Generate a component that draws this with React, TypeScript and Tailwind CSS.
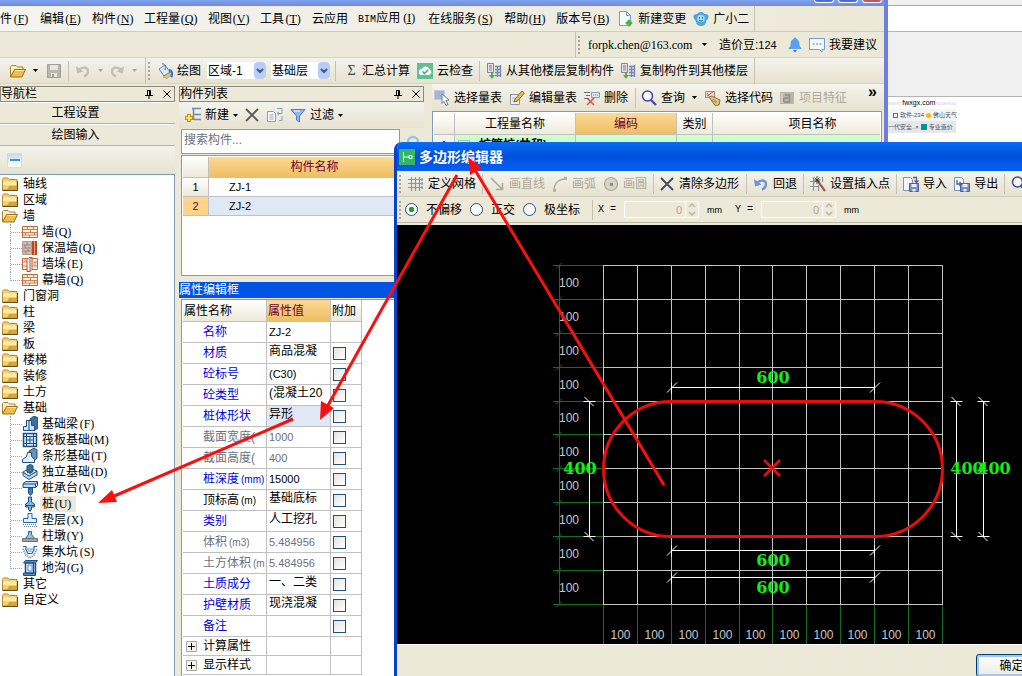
import { useState } from 'react';
import type { ReactNode } from 'react';
import clsx from 'clsx';

interface IconProps {
  children: ReactNode;
  className?: string;
}

const Icon = ({ children, className }: IconProps) => (
  <svg viewBox="0 0 16 16" fill="none" className={clsx('h-4 w-4 shrink-0', className)} aria-hidden="true">
    {children}
  </svg>
);

const Caret = ({ className }: { className?: string }) => (
  <svg viewBox="0 0 5 3" className={clsx('h-[3px] w-[5px] shrink-0', className)} aria-hidden="true">
    <path d="M0 0h5L2.5 3z" fill="currentColor" />
  </svg>
);

const FolderIcon = ({ className }: { className?: string }) => (
  <Icon className={className}>
    <path d="M.5 3.500l1-1.500h4.500l1.500 1.500h7.500v10.500H.5z" fill="#f4d06c" stroke="#b08c36" />
    <path d="M1 5.500h13.500v3.500H1z" fill="#fdeaa8" />
    <path d="M7 10h8v4H5z" fill="#dba22c" />
    <path d="M.5 14.500h15V5" stroke="#5f4a22" />
  </Icon>
);

const OpenFolderIcon = ({ className }: { className?: string }) => (
  <Icon className={className}>
    <path d="M.5 13.500V3.500l1-1h4.500l1.500 1.500h5.500v3" fill="#fdf0b4" stroke="#a8842c" />
    <path d="M.5 14l4-7.500h11l-3.500 7.500z" fill="#f0bd4a" stroke="#94702a" />
    <path d="M5 7.500h9" stroke="#ffe9a0" />
  </Icon>
);

const SaveIcon = ({ className }: { className?: string }) => (
  <Icon className={className}>
    <path d="M1.500 1.500h13v13h-13z" fill="#b9b7ad" stroke="#a3a197" />
    <path d="M4 2h8v5H4zM5 10h6v4H5z" fill="#e8e6da" />
    <path d="M6 11h2v3H6z" fill="#a3a197" />
  </Icon>
);

const UndoIcon = ({ className }: { className?: string }) => (
  <Icon className={className}>
    <path d="M4 8c1-4 9-5 9 0 0 2.500-1.500 4.500-4 5.500" stroke="currentColor" strokeWidth="2.500" />
    <path d="M1 3l1 7.500 6.500-2z" fill="currentColor" />
  </Icon>
);

const PaintIcon = ({ className }: { className?: string }) => (
  <Icon className={className}>
    <path d="M2 6l6-4 5 7-6 4z" fill="#dfe8f6" stroke="#5c7fb5" />
    <path d="M5 1c3-1 4 3 3 6" stroke="#456aa5" />
    <path d="M12 7c3 1 4 4 2 7" stroke="#3e74d0" strokeWidth="2.500" />
    <path d="M6 14l6-4 2 2-4 3.500z" fill="#e4c868" stroke="#9c8a4a" strokeWidth=".6" />
  </Icon>
);

const CloudCheckIcon = ({ className }: { className?: string }) => (
  <Icon className={className}>
    <path d="M0 0h16v16H0z" fill="#5fc191" />
    <path d="M4.500 12h7.500a3 3 0 0 0 .4-5.800A4 4 0 0 0 5 6a3 3 0 0 0-.5 6z" fill="#fff" />
    <path d="M5.500 8.500l2 2 3.500-3.500" stroke="#3aa872" strokeWidth="1.500" />
  </Icon>
);

const CopyFloorIcon = ({ className }: { className?: string }) => (
  <Icon className={className}>
    <path d="M1.500.5h6v9h-6z" fill="#e3e3ea" stroke="#84848e" />
    <path d="M3 3h3" stroke="#c44" />
    <path d="M3 5h3M3 7h3" stroke="#84848e" />
    <path d="M9 3.500h5.500M9 6.500h5.500M9 9.500h5.500M9 12.500h5.500M14.500 2v12M11.500 3v11" stroke="#7289b7" strokeWidth="1.300" />
    <path d="M5 9v3H3l3 4 3-4H7V9z" fill="#57a45c" />
  </Icon>
);

const NewChangeIcon = ({ className }: { className?: string }) => (
  <Icon className={className}>
    <path d="M1.500.5h7l4 4v10h-11z" fill="#f4faff" stroke="#6fa1d4" />
    <path d="M8.500.5v4h4" stroke="#6fa1d4" />
    <path d="M11 8l1.500 2.500 2.500 1.500-2.500 1.500L11 16l-1.500-2.500L7 12l2.500-1.500z" fill="#4bb03e" />
    <path d="M11 9v6M8 12h6" stroke="#4bb03e" strokeWidth="2.500" />
  </Icon>
);

const MascotIcon = ({ className }: { className?: string }) => (
  <Icon className={className}>
    <path d="M8 1c2 0 3 2 4 2s4 0 3.500 3-2.500 3-2.500 5-2 4-5 4-5-2-5-4-2-2-2.500-5S4 3 4 3s2-2 4-2z" fill="#4aa8dd" />
    <circle cx="8" cy="7.500" r="3.800" fill="#a9dcf5" />
    <path d="M6.500 6v1.500M9.500 6v1.500M6 9c1 1.500 3 1.500 4 0" stroke="#1c66a0" />
  </Icon>
);

const BellIcon = ({ className }: { className?: string }) => (
  <Icon className={className}>
    <path d="M8 .5c1 0 1.500.8 1.500 1.500C12 3 12.500 5 12.500 8c0 2 2 2.500 2 4h-13c0-1.500 2-2 2-4 0-3 .5-5 3-6 0-.7.5-1.500 1.500-1.500z" fill="#5aa2f0" />
    <path d="M6 13h4l-2 2.500z" fill="#3a6fb5" />
  </Icon>
);

const ChatIcon = ({ className }: { className?: string }) => (
  <Icon className={className}>
    <path d="M.5 1.500h15v11H13v2.500l-2.500-2.500H.5z" fill="#f3f9ff" stroke="#6e9fd6" />
    <path d="M3.500 7h2M7 7h2M10.500 7h2" stroke="#4f83bf" />
  </Icon>
);

const SelectTableIcon = ({ className }: { className?: string }) => (
  <Icon className={className}>
    <path d="M.5.5h10v9H.5z" fill="#a9b3d4" stroke="#c5cbe0" />
    <path d="M8 4l7 6-3 .5 2 4-2 1-2-4-2 2z" fill="#fff" stroke="#6c7ca8" />
  </Icon>
);

const EditTableIcon = ({ className }: { className?: string }) => (
  <Icon className={className}>
    <path d="M1.500 4.500h9v10h-9z" fill="#eef1f5" stroke="#8b97a8" />
    <path d="M3 8h5M3 11h6" stroke="#9fb0c8" />
    <path d="M5 12l1-3 7-8 2.500 2-7 8z" fill="#e8b850" stroke="#755a2c" strokeWidth=".8" />
  </Icon>
);

const DeleteRowIcon = ({ className }: { className?: string }) => (
  <Icon className={className}>
    <path d="M0 2.500h6M2 5.500h4M0 8.500h5" stroke="#5f6f80" />
    <path d="M7.500 2.500h8v5h-8z" fill="#dce8f7" stroke="#7c9bc5" />
    <path d="M9 5h5" stroke="#6587b8" strokeDasharray="1 1" />
    <path d="M3 8l7 7M10 8l-7 7" stroke="#e2504a" strokeWidth="1.600" />
  </Icon>
);

const SearchIcon = ({ className }: { className?: string }) => (
  <Icon className={className}>
    <circle cx="6.500" cy="6" r="5" fill="#f5f8fd" stroke="#42459a" strokeWidth="1.500" />
    <path d="M10 10l5 5" stroke="#42459a" strokeWidth="2.200" />
  </Icon>
);

const CodeTagIcon = ({ className }: { className?: string }) => (
  <Icon className={className}>
    <path d="M.5 1.500h9v6h-9z" fill="#f3dede" stroke="#9c8c8c" />
    <path d="M2 6l6-4M2 3l2 3" stroke="#d05050" />
    <path d="M4 7l3-1 8 4-1 5-4 .5z" fill="#e3c684" stroke="#8c6f3c" />
    <path d="M8 9l4 3M7 10l4 3" stroke="#8c6f3c" strokeWidth=".7" />
  </Icon>
);

const FeatureIcon = ({ className }: { className?: string }) => (
  <Icon className={className}>
    <path d="M1 2h14v12H1z" fill="#b9b7ab" />
    <path d="M6 5h4.500v7H6.500a2 2 0 0 1 0-4H10" stroke="#8f8d82" strokeWidth="1.500" />
    <path d="M3 3v10" stroke="#e6e4d8" />
  </Icon>
);

const NewItemIcon = ({ className }: { className?: string }) => (
  <Icon className={className}>
    <path d="M7 1.500h9M9 7.500h7M9 12.500h7M8.500 1v12" stroke="#6f8bb3" strokeWidth="1.500" />
    <path d="M4 7v8M0 11h8" stroke="#b98f1e" strokeWidth="4" />
    <path d="M4 8v6M1 11h6" stroke="#ffe36a" strokeWidth="2" />
  </Icon>
);

const CrossIcon = ({ className }: { className?: string }) => (
  <Icon className={className}>
    <path d="M2 2l12 12M14 2L2 14" stroke="currentColor" strokeWidth="1.800" />
  </Icon>
);

const CopyIcon = ({ className }: { className?: string }) => (
  <Icon className={className}>
    <path d="M.5 4.500h6l2 2v8h-8z" fill="#f5f7fb" stroke="#8c9dba" />
    <path d="M2.500 8h4M2.500 10h4M2.500 12h4" stroke="#9aacc9" />
    <path d="M10 1.500h5v5h-4M12 13.500h3V9M12 5l-2 1.500 2 1.500" stroke="#8c9dba" />
  </Icon>
);

const FunnelIcon = ({ className }: { className?: string }) => (
  <Icon className={className}>
    <path d="M1 2.500h14L9.500 9v6l-3-2V9z" fill="#8fb6ef" stroke="#4f7fc9" />
    <path d="M4 4h6" stroke="#d7e6fb" strokeWidth="1.500" />
  </Icon>
);

const PinIcon = ({ className }: { className?: string }) => (
  <svg viewBox="0 0 8 9" fill="none" className={clsx('h-[9px] w-2 shrink-0', className)} aria-hidden="true">
    <path d="M2.500 5V.5h3V5M0 5.500h8M4 6v3" stroke="#000" />
    <path d="M5 1v4" stroke="#000" strokeWidth="2" />
  </svg>
);

const CloseMark = () => (
  <svg viewBox="0 0 8 8" fill="none" className="h-2 w-2 shrink-0" aria-hidden="true">
    <path d="M.5.5l7 7M7.500.5l-7 7" stroke="#000" />
  </svg>
);

const GridIcon = ({ className }: { className?: string }) => (
  <Icon className={className}>
    <path d="M0 3.500h14M0 7.500h14M0 11.500h14M3.500 1v14M7.500 1v14M11.500 1v14" stroke="#7d95c4" strokeWidth="1.200" />
    <path d="M13 3.500h3M13 7.500h3M13 11.500h3" stroke="#8aa2cc" strokeWidth="2.500" strokeDasharray="2 1" />
  </Icon>
);

const LineIcon = ({ className }: { className?: string }) => (
  <Icon className={className}>
    <path d="M2 2l11 11M13.500 7v6.500H7" stroke="#aaa89c" strokeWidth="1.500" />
  </Icon>
);

const ArcIcon = ({ className }: { className?: string }) => (
  <Icon className={className}>
    <path d="M2 15C2 7 7 3 14 3" stroke="#aaa89c" strokeWidth="1.500" />
    <path d="M1 13h3v3H1zM12 1h3v3h-3z" fill="#b5b3a8" />
  </Icon>
);

const CircleIcon = ({ className }: { className?: string }) => (
  <Icon className={className}>
    <circle cx="8" cy="8" r="6.500" fill="#d6d4c8" stroke="#aaa89c" strokeWidth="1.200" />
    <path d="M7 7h3v3H7z" fill="#8f8d82" />
  </Icon>
);

const InsertPointIcon = ({ className }: { className?: string }) => (
  <Icon className={className}>
    <path d="M0 5.500h10M0 10.500h9M3.500 1v14M8.500 9v6M12.500 1v5" stroke="#8c95a6" strokeWidth="1.200" />
    <path d="M7 4l8 11" stroke="#a15a4e" strokeWidth="2.200" />
    <path d="M7 0v8M3.500 4h7M4.500 1.500l5 5M9.500 1.500l-5 5" stroke="#333" strokeWidth=".8" />
  </Icon>
);

const TransferIcon = ({ className, out = false }: { className?: string; out?: boolean }) => (
  <Icon className={className}>
    <path d="M.5 1.500h7l2 2v11h-9z" fill="#f2f5fb" stroke="#7e93bd" />
    <path d="M6.500 7.500h9v8h-9z" fill="#7d90c4" stroke="#4c609a" />
    <path d="M8.500 8h5v3h-5zM9.500 13h3v2.500h-3z" fill="#e9eef9" />
    <path d={out ? 'M3 4v4h4M5.500 6l2 2-2 2' : 'M10 1.500h3.500V6M11.500 4.500l2 2 2-2'} stroke="#4c609a" strokeWidth="1.300" />
  </Icon>
);

const BrickIcon = () => (
  <Icon>
    <path d="M.5 2.500h15v11H.5z" fill="#fdf1e6" stroke="#c4683a" />
    <path d="M1 5.500h14M1 8.500h14M1 11h14M5.500 3v2.500M11.500 3v2.500M8.500 6v2M3.500 9v2M12.500 9v2M7.500 11v2" stroke="#d5804f" />
  </Icon>
);

const InsulatedWallIcon = () => (
  <Icon>
    <path d="M.5 1.500h9v13h-9z" fill="#cdbbb8" stroke="#b99c96" />
    <path d="M1 5h8M1 8h8M1 11h8M5 2v3M3 5v3M6 8v3M4 11v3" stroke="#a88680" />
    <path d="M11 1v14M14 1v14" stroke="#b8482c" strokeWidth="2" />
    <path d="M12.500 1v14" stroke="#f0a070" />
  </Icon>
);

const WallPierIcon = () => (
  <Icon>
    <path d="M.5 2.500h15v11H.5z" fill="#fdf1e6" stroke="#c4683a" />
    <path d="M1 6h4M1 10h4M11 6h4M11 10h4M3 3v3M13 6v4" stroke="#d5804f" />
    <path d="M5 3.500l2-2h3v12l-2 2H5z" fill="#fff" stroke="#b8482c" />
    <path d="M8 3.500v12M8 3.500l2-2" stroke="#b8482c" />
  </Icon>
);

const beamParts = (
  <>
    <path d="M8 3l4-3 4 2v10l-4 3z" fill="#3f6f9f" stroke="#1d4f86" />
    <path d="M4.500 4.500h5v5h3v5H1.500v-4h3z" fill="#cfe6f8" stroke="#1d4f86" />
    <path d="M7 5v9" stroke="#1d4f86" />
  </>
);

const raftParts = (
  <>
    <path d="M1.500 1.500h13v13h-13z" fill="#d6eaf9" stroke="#1d4f86" strokeWidth="1.500" />
    <path d="M4.500 1v14M11.500 1v14M1 4.500h14M1 11.500h14M8 4v8M4 8h8" stroke="#1d4f86" />
  </>
);

const stripParts = (
  <>
    <path d="M7 3l5-3 3 2v8l-4 4z" fill="#6c8fb5" stroke="#1d4f86" />
    <path d="M5.500 4.500h4v4l3 3v3H.500v-3l4-3z" fill="#e4f2fd" stroke="#1d4f86" />
  </>
);

const isolatedParts = (
  <>
    <path d="M1 8l6 4 8-5v4l-8 4.500-6-4z" fill="#bcdcf3" stroke="#1d4f86" />
    <path d="M1 8l7-4 7 3-8 5z" fill="#e4f2fd" stroke="#1d4f86" />
    <path d="M5 2l3-1.500 3 1v6l-3 2-3-1.500z" fill="#3f6f9f" stroke="#1d4f86" />
  </>
);

const capParts = (
  <>
    <path d="M1 3.500l3-2h11.500v4l-2 2H1z" fill="#bcdcf3" stroke="#1d4f86" />
    <path d="M1 4h12.500v3M13.500 4l2-2" stroke="#1d4f86" />
    <path d="M6.500 8h4v5l-2 2.500-2-2.500z" fill="#3f7fc0" stroke="#1d4f86" />
  </>
);

const pileParts = (
  <>
    <path d="M6.500 1h3v5l3 2v3h-3v2L8 15.500 6.500 13v-2h-3V8l3-2z" fill="#7fb4e2" stroke="#1d4f86" />
    <path d="M4 9.500h8" stroke="#1d4f86" />
  </>
);

const cushionParts = (
  <>
    <path d="M6 1.500h4v5h4.500v4H1.500v-4H6z" fill="#e4f2fd" stroke="#2463b0" />
    <path d="M1 12.500h14M2 14.500h13" stroke="#5a7ba6" strokeDasharray="1 1" />
  </>
);

const pierParts = (
  <>
    <path d="M6.500 3.500h3v3l3 4h-9l3-4z" fill="#8fc0ee" stroke="#2463b0" />
    <path d="M.5 10.500h15v3H.5z" fill="#a5a5a5" stroke="#6e6e6e" />
  </>
);

const sumpParts = (
  <>
    <path d="M1 2.500h3v3l2 4h4l2-4v-3h3" stroke="#2463b0" strokeWidth="1.200" />
    <path d="M1 5l3 6 4 3 4-3 3-6" stroke="#5b8fd0" strokeWidth="2" strokeDasharray="1 1" />
    <path d="M5 5h6M6 7h4" stroke="#5b8fd0" />
  </>
);

const trenchParts = (
  <>
    <path d="M1.500 3l2-2.500h12l-2 2.500zM1.500 13h12v2.500h-12z" fill="#5d94cb" stroke="#1d4f86" />
    <path d="M3.500 3h8v10h-8zM13.500 3v10" fill="#e4f2fd" stroke="#1d4f86" strokeWidth="1.500" />
    <path d="M6 5h4v6H6z" stroke="#5d94cb" />
  </>
);

interface TreeLeaf {
  label: string;
  hotkey: string;
  icon: ReactNode;
}

interface TreeGroup {
  label: string;
  children?: TreeLeaf[];
}

const NAV_TREE: TreeGroup[] = [
  { label: '轴线' },
  { label: '区域' },
  {
    label: '墙',
    children: [
      { label: '墙', hotkey: 'Q', icon: <BrickIcon /> },
      { label: '保温墙', hotkey: 'Q', icon: <InsulatedWallIcon /> },
      { label: '墙垛', hotkey: 'E', icon: <WallPierIcon /> },
      { label: '幕墙', hotkey: 'Q', icon: <BrickIcon /> },
    ],
  },
  { label: '门窗洞' },
  { label: '柱' },
  { label: '梁' },
  { label: '板' },
  { label: '楼梯' },
  { label: '装修' },
  { label: '土方' },
  {
    label: '基础',
    children: [
      { label: '基础梁', hotkey: 'F', icon: <Icon>{beamParts}</Icon> },
      { label: '筏板基础', hotkey: 'M', icon: <Icon>{raftParts}</Icon> },
      { label: '条形基础', hotkey: 'T', icon: <Icon>{stripParts}</Icon> },
      { label: '独立基础', hotkey: 'D', icon: <Icon>{isolatedParts}</Icon> },
      { label: '桩承台', hotkey: 'V', icon: <Icon>{capParts}</Icon> },
      { label: '桩', hotkey: 'U', icon: <Icon>{pileParts}</Icon> },
      { label: '垫层', hotkey: 'X', icon: <Icon>{cushionParts}</Icon> },
      { label: '柱墩', hotkey: 'Y', icon: <Icon>{pierParts}</Icon> },
      { label: '集水坑', hotkey: 'S', icon: <Icon>{sumpParts}</Icon> },
      { label: '地沟', hotkey: 'G', icon: <Icon>{trenchParts}</Icon> },
    ],
  },
  { label: '其它' },
  { label: '自定义' },
];

const MENU = [
  { label: '件', hotkey: 'F' },
  { label: '编辑', hotkey: 'E' },
  { label: '构件', hotkey: 'N' },
  { label: '工程量', hotkey: 'Q' },
  { label: '视图', hotkey: 'V' },
  { label: '工具', hotkey: 'T' },
  { label: '云应用' },
  { prefix: 'BIM', label: '应用', hotkey: 'I' },
  { label: '在线服务', hotkey: 'S' },
  { label: '帮助', hotkey: 'H' },
  { label: '版本号', hotkey: 'B' },
];

const PROPERTIES = [
  { name: '名称', value: 'ZJ-2', tone: 'blue', check: false },
  { name: '材质', value: '商品混凝', tone: 'blue', check: true },
  { name: '砼标号', value: '(C30)', tone: 'blue', check: true },
  { name: '砼类型', value: '(混凝土20', tone: 'blue', check: true },
  { name: '桩体形状', value: '异形', tone: 'blue', check: true },
  { name: '截面宽度(', value: '1000', tone: 'gray', check: true },
  { name: '截面高度(', value: '400', tone: 'gray', check: true },
  { name: '桩深度', unit: '(mm)', value: '15000', tone: 'blue', check: true },
  { name: '顶标高', unit: '(m)', value: '基础底标', tone: 'black', check: true },
  { name: '类别', value: '人工挖孔', tone: 'blue', check: true },
  { name: '体积', unit: '(m3)', value: '5.484956', tone: 'gray', check: true },
  { name: '土方体积', unit: '(m', value: '5.484956', tone: 'gray', check: true },
  { name: '土质成分', value: '一、二类', tone: 'blue', check: true },
  { name: '护壁材质', value: '现浇混凝', tone: 'blue', check: true },
  { name: '备注', value: '', tone: 'blue', check: true },
];

const Hotkey = ({ letter, underline = false }: { letter: string; underline?: boolean }) => (
  <span className="inline-block w-[18px] text-center font-['Liberation_Serif',serif]">
    (<span className={underline ? 'underline' : ''}>{letter}</span>)
  </span>
);

const Divider = ({ className }: { className?: string }) => (
  <span className={clsx('h-5 w-px shrink-0 bg-[#c5c2b2]', className)} />
);

const Grip = ({ className }: { className?: string }) => (
  <span className={clsx('h-[18px] shrink-0 border-l-2 border-dotted border-[#a9a695]', className)} />
);

interface ToolButtonProps {
  icon?: ReactNode;
  label?: string;
  className?: string;
  disabled?: boolean;
  menu?: boolean;
  tight?: boolean;
}

function ToolButton({ icon, label, className, disabled, menu, tight }: ToolButtonProps) {
  return (
    <button
      type="button"
      disabled={disabled}
      className={clsx('flex shrink-0 items-center whitespace-nowrap', disabled && 'text-[#aca899]', className)}
    >
      {icon}
      {label && <span className={icon ? 'ml-1' : ''}>{label}</span>}
      {menu && <Caret className={tight ? 'ml-1' : 'ml-[7px]'} />}
    </button>
  );
}

function ComboBox({ label, options, className }: { label: string; options: string[]; className?: string }) {
  return (
    <span className={clsx('relative block w-[59px] shrink-0', className)}>
      <select aria-label={label} className="h-[17px] w-full appearance-none bg-white pl-px text-xs leading-4">
        {options.map((option) => (
          <option key={option}>{option}</option>
        ))}
      </select>
      <span className="pointer-events-none absolute inset-y-0 right-0 flex w-3 items-center justify-center rounded-sm bg-[#b9cdf7]">
        <svg viewBox="0 0 8 6" fill="none" className="h-[6px] w-2">
          <path d="M1 1l3 3 3-3" stroke="#3d5a8c" strokeWidth="2" />
        </svg>
      </span>
    </span>
  );
}

function PanelHeading({ title }: { title: string }) {
  return (
    <header className="mt-[2px] flex h-[16px] shrink-0 items-center border border-[#8b897b] pr-[3px]">
      <h2 className="flex-1 leading-[14px]">{title}</h2>
      <button type="button" aria-label="固定" className="mr-[10px]">
        <PinIcon />
      </button>
      <button type="button" aria-label="关闭">
        <CloseMark />
      </button>
    </header>
  );
}

function MenuBar() {
  return (
    <nav className="flex h-[26px] shrink-0 items-center gap-[10px] border-b border-[#cfccbd] bg-gradient-to-r from-[#f4f4f0] to-[#ece9d8]">
      {MENU.map((item) => (
        <button key={item.label} type="button" className="shrink-0 whitespace-nowrap">
          {item.prefix && <span className="font-['Liberation_Mono',monospace] text-[10px]">{item.prefix}</span>}
          {item.label}
          {item.hotkey && <Hotkey letter={item.hotkey} underline />}
        </button>
      ))}
      <ToolButton icon={<NewChangeIcon />} label="新建变更" className="-ml-[2px]" />
      <ToolButton icon={<MascotIcon />} label="广小二" className="-ml-[3px]" />
      <Divider className="-ml-[5px] h-[26px]" />
    </nav>
  );
}

function AccountBar() {
  return (
    <div className="flex h-[26px] shrink-0 items-center justify-end border-b border-[#d8d5c5] pr-[7px]">
      <Divider className="h-[26px]" />
      <Grip className="ml-[2px]" />
      <ToolButton
        label="forpk.chen@163.com"
        menu
        className="ml-2 w-[121px] justify-between pr-[2px] font-['Liberation_Serif',serif]"
      />
      <span className="ml-[10px] w-[60px] shrink-0 whitespace-nowrap">
        造价豆:<span className="text-[11px]">124</span>
      </span>
      <button type="button" aria-label="通知" className="ml-2">
        <BellIcon />
      </button>
      <ToolButton icon={<ChatIcon />} label="我要建议" className="ml-[6px]" />
    </div>
  );
}

function MainToolbar() {
  return (
    <div className="flex h-[26px] shrink-0 items-center border-b border-[#d8d5c5] bg-gradient-to-b from-[#f5f4ec] to-[#e6e2d0]">
      <ToolButton icon={<OpenFolderIcon />} menu className="ml-[10px]" />
      <ToolButton icon={<SaveIcon />} disabled className="ml-2" />
      <Divider className="ml-[6px] bg-[#aaa797]" />
      <ToolButton icon={<UndoIcon className="text-[#c3c1b5]" />} disabled menu className="ml-[6px]" />
      <ToolButton icon={<UndoIcon className="-scale-x-100 text-[#c3c1b5]" />} disabled menu className="ml-[6px]" />
      <Divider className="ml-2 h-[26px]" />
      <Grip className="ml-[2px]" />
      <ToolButton icon={<PaintIcon />} label="绘图" className="ml-[7px]" />
      <ComboBox label="区域" options={['区域-1']} className="ml-[6px]" />
      <ComboBox label="楼层" options={['基础层']} className="ml-[5px]" />
      <Divider className="ml-[5px]" />
      <ToolButton
        icon={<span className="w-[13px] font-['Liberation_Serif',serif] text-sm text-gray-700">Σ</span>}
        label="汇总计算"
        className="ml-[9px]"
      />
      <ToolButton icon={<CloudCheckIcon />} label="云检查" className="ml-[7px]" />
      <Divider className="ml-[6px]" />
      <ToolButton icon={<CopyFloorIcon />} label="从其他楼层复制构件" className="ml-[6px]" />
      <ToolButton icon={<CopyFloorIcon />} label="复制构件到其他楼层" className="ml-[6px]" />
      <Divider className="ml-[6px] h-[26px]" />
    </div>
  );
}

function NavigationPanel() {
  return (
    <aside className="flex w-[175px] shrink-0 flex-col">
      <PanelHeading title="导航栏" />
      <button
        type="button"
        className="h-[22px] shrink-0 border-b border-t border-[#b5b2a2] border-t-white pr-[24px] leading-5"
      >
        工程设置
      </button>
      <button
        type="button"
        className="h-[22px] shrink-0 border-b border-t border-[#b5b2a2] border-t-white pr-[24px] leading-5"
      >
        绘图输入
      </button>
      <div className="flex h-[28px] shrink-0 items-center bg-gradient-to-b from-[#f5f4ec] to-[#e6e2d0] pl-[7px]">
        <button
          type="button"
          aria-label="全部折叠"
          className="flex h-[15px] w-[15px] items-center justify-center border border-[#cfdcec] bg-gradient-to-b from-[#c4dbf4] to-white"
        >
          <span className="h-[2px] w-[10px] bg-[#4a94b8]" />
        </button>
      </div>
      <ul className="flex-1 overflow-hidden border-r border-t border-[#7f9db9] bg-white pt-px">
        {NAV_TREE.map((group) => (
          <li key={group.label}>
            <div className="flex h-4 items-center pl-[2px]">
              {group.children ? <OpenFolderIcon /> : <FolderIcon />}
              <span className="ml-[5px]">{group.label}</span>
            </div>
            {group.children && (
              <ul>
                {group.children.map((leaf, index) => (
                  <li key={leaf.label} className="flex h-4 items-center pl-[10px]">
                    <span
                      className={clsx(
                        'w-3 shrink-0 self-start border-l border-dotted border-gray-400',
                        index === group.children!.length - 1 ? 'h-[9px]' : 'h-4'
                      )}
                    >
                      <span className="block h-[9px] border-b border-dotted border-gray-400" />
                    </span>
                    {leaf.icon}
                    <span className={clsx('ml-[2px] pl-[2px] pr-1', leaf.label === '桩' && 'bg-[#ece9d8]')}>
                      {leaf.label}
                      <Hotkey letter={leaf.hotkey} />
                    </span>
                  </li>
                ))}
              </ul>
            )}
          </li>
        ))}
      </ul>
    </aside>
  );
}

function ComponentList() {
  return (
    <>
      <PanelHeading title="构件列表" />
      <div className="flex h-[26px] shrink-0 items-center bg-gradient-to-b from-[#f5f4ec] to-[#e6e2d0]">
        <ToolButton icon={<NewItemIcon />} label="新建" menu tight className="ml-[6px]" />
        <ToolButton icon={<CrossIcon className="text-[#555]" />} className="ml-[6px]" />
        <ToolButton icon={<CopyIcon />} className="ml-[7px]" />
        <ToolButton icon={<FunnelIcon />} label="过滤" menu tight className="ml-[7px]" />
      </div>
      <div className="mt-px flex h-[25px] shrink-0 items-center">
        <input
          type="text"
          aria-label="搜索构件"
          placeholder="搜索构件..."
          className="ml-[2px] h-full w-[219px] border border-[#7f9db9] bg-white px-[2px] pb-1 text-xs placeholder:text-gray-500"
        />
        <svg viewBox="0 0 16 16" fill="none" className="ml-[5px] h-4 w-4 self-center">
          <circle cx="8" cy="8" r="5" stroke="#9cc3ea" strokeWidth="2.500" />
        </svg>
      </div>
      <div className="ml-[2px] mt-px h-[121px] shrink-0 border border-[#7f9db9] bg-white p-px">
        <table className="w-full table-fixed border-separate border-spacing-0">
          <thead>
            <tr className="h-[21px]">
              <th className="w-[26px] border-b border-r border-[#c0c0c0] bg-gradient-to-b from-white to-[#ece9d8] p-0" />
              <th className="border-b border-[#c0c0c0] bg-gradient-to-b from-[#fbd994] to-[#f0be62] p-0 pr-[2px] font-normal text-[#6b0030]">
                构件名称
              </th>
            </tr>
          </thead>
          <tbody>
            {['ZJ-1', 'ZJ-2'].map((name, index) => (
              <tr key={name} className="h-[19px] text-[11px]">
                <td
                  className={clsx(
                    'border-b border-r border-[#c0c0c0] p-0 text-center',
                    index === 1 ? 'bg-[#ffd48a] text-[#6b0030]' : 'bg-gradient-to-b from-white to-[#ece9d8]'
                  )}
                >
                  {index + 1}
                </td>
                <td className={clsx('border-b border-[#c0c0c0] p-0 pl-5', index === 1 && 'bg-[#e0e8f6]')}>{name}</td>
              </tr>
            ))}
          </tbody>
        </table>
      </div>
    </>
  );
}

const isNarrowText = (value: string) => /^[\x20-\x7e]*$/.test(value);

function PropertyEditor() {
  return (
    <>
      <h2 className="mt-[6px] h-4 shrink-0 bg-[#0054e3] leading-4 text-white">属性编辑框</h2>
      <div className="ml-[2px] mt-px flex-1 overflow-hidden border-l border-t border-[#7f9db9] bg-white pl-px">
        <table className="w-[179px] table-fixed border-separate border-spacing-0">
          <thead>
            <tr className="h-[22px] text-left">
              <th className="w-[84px] border-b border-r border-[#c0c0c0] bg-gradient-to-b from-white to-[#ece9d8] p-0 pl-px font-normal">
                属性名称
              </th>
              <th className="w-[64px] border-b border-r border-[#c0c0c0] bg-gradient-to-b from-[#fbd994] to-[#f0be62] p-0 pl-px font-normal text-[#6b0030]">
                属性值
              </th>
              <th className="w-[31px] border-b border-r border-[#c0c0c0] bg-gradient-to-b from-white to-[#ece9d8] p-0 pl-px font-normal">
                附加
              </th>
            </tr>
          </thead>
          <tbody>
            {PROPERTIES.map((row) => (
              <tr
                key={row.name}
                className={clsx('h-[21px] whitespace-nowrap', row.tone === 'gray' && 'text-gray-500')}
              >
                <td
                  className={clsx(
                    'overflow-hidden border-b border-r border-[#c0c0c0] p-0 pl-5',
                    row.tone === 'blue' && 'text-[#0000e0]'
                  )}
                >
                  {row.name}
                  {row.unit && <span className="ml-[2px] text-[10px]">{row.unit}</span>}
                </td>
                <td
                  className={clsx(
                    'overflow-hidden border-b border-r border-[#c0c0c0] p-0 pl-[2px]',
                    isNarrowText(row.value) ? 'text-[11px]' : 'pb-1',
                    row.value === '异形' && 'bg-[#e0e8f6]'
                  )}
                >
                  {row.value}
                </td>
                <td className="border-b border-r border-[#c0c0c0] p-0 pl-[2px]">
                  {row.check && (
                    <input
                      type="checkbox"
                      aria-label={`附加 ${row.name}`}
                      className="block h-[13px] w-[13px] appearance-none border border-[#1c5180] bg-gradient-to-br from-[#e6e4de] to-white"
                    />
                  )}
                </td>
              </tr>
            ))}
            {['计算属性', '显示样式'].map((name) => (
              <tr key={name} className="h-[19px]">
                <td className="border-b border-r border-[#c0c0c0] p-0 pl-[3px]">
                  <button type="button" className="flex items-center">
                    <svg viewBox="0 0 11 11" fill="none" className="mr-[6px] h-[11px] w-[11px]">
                      <path d="M.5.5h10v10H.5z" fill="#f3f3ef" stroke="#a8a8a0" />
                      <path d="M2 5.500h7M5.500 2v7" stroke="#000" />
                    </svg>
                    {name}
                  </button>
                </td>
                <td className="border-b border-r border-[#c0c0c0] p-0" />
                <td className="border-b border-r border-[#c0c0c0] p-0" />
              </tr>
            ))}
          </tbody>
        </table>
      </div>
    </>
  );
}

function QuantityPanel() {
  return (
    <section className="ml-2 flex min-w-0 flex-1 flex-col">
      <div className="flex h-[27px] shrink-0 items-center bg-gradient-to-b from-[#f5f4ec] to-[#e6e2d0]">
        <ToolButton icon={<SelectTableIcon />} label="选择量表" className="ml-[2px]" />
        <ToolButton icon={<EditTableIcon />} label="编辑量表" className="ml-[7px]" />
        <ToolButton icon={<DeleteRowIcon />} label="删除" className="ml-[7px]" />
        <Divider className="ml-[7px] bg-[#aaa797]" />
        <ToolButton icon={<SearchIcon />} label="查询" menu className="ml-[5px]" />
        <ToolButton icon={<CodeTagIcon />} label="选择代码" className="ml-[8px]" />
        <ToolButton icon={<FeatureIcon />} label="项目特征" disabled className="ml-[6px]" />
        <button type="button" className="ml-auto mr-[7px] self-start text-base font-bold leading-4">
          »
        </button>
      </div>
      <div className="mr-[2px] flex-1 border border-[#7f9db9] bg-white p-px">
        <table className="w-full table-fixed border-separate border-spacing-0">
          <thead>
            <tr className="h-[22px] bg-gradient-to-b from-white to-[#ece9d8]">
              <th className="w-[21px] border-b border-r border-[#c0c0c0] p-0" />
              <th className="w-[121px] border-b border-r border-[#c0c0c0] p-0 font-normal">工程量名称</th>
              <th className="w-[101px] border-b border-r border-[#c0c0c0] bg-gradient-to-b from-[#fbd994] to-[#f0be62] p-0 font-normal text-[#6b0030]">
                编码
              </th>
              <th className="w-[36px] border-b border-r border-[#c0c0c0] p-0 font-normal">类别</th>
              <th className="border-b border-[#c0c0c0] p-0 pl-8 font-normal">项目名称</th>
            </tr>
          </thead>
          <tbody>
            <tr className="h-5 bg-[#ccffcc]">
              <td className="border-r border-[#c0c0c0] bg-[#f4f2e8] p-0 text-center text-[11px]">1</td>
              <td className="border-r border-[#c0c0c0] p-0 font-bold">
                <span className="ml-[3px] mr-[9px] inline-block h-3 w-3 border border-[#a8c8a8] align-middle" />
                桩管桩(共和)
              </td>
              <td className="border-r border-[#c0c0c0] p-0" />
              <td className="border-r border-[#c0c0c0] p-0" />
              <td className="p-0" />
            </tr>
          </tbody>
        </table>
      </div>
    </section>
  );
}

function CoordinateField({ axis, className }: { axis: string; className?: string }) {
  return (
    <label className={clsx('flex items-center', className)}>
      <span className="w-[26px] whitespace-pre font-['Liberation_Mono',monospace] text-[10px]">{axis} =</span>
      <span className="flex h-[17px] w-[75px] items-center border border-white bg-[#ece9d8]">
        <input
          type="text"
          disabled
          defaultValue="0"
          className="w-[61px] border-r border-white pr-[3px] text-right text-[11px] text-[#aca899]"
        />
        <svg viewBox="0 0 12 15" fill="none" className="h-[15px] w-3">
          <path d="M3 5l3-3 3 3M3 10l3 3 3-3" stroke="#b8b5a5" strokeWidth="1.500" />
        </svg>
      </span>
      <span className="ml-2 w-[14px] text-[9px]">mm</span>
    </label>
  );
}

const GRID_X = [603.5, 637.5, 671.5, 705.5, 739.5, 772.5, 806.5, 840.5, 874.5, 908.5, 942.5];
const GRID_Y = [265.5, 299.5, 333.5, 367.5, 401.5, 434.5, 468.5, 502.5, 536.5, 570.5, 604.5];

function PolygonDrawing() {
  return (
    <svg viewBox="397 225 626 419" className="h-[419px] w-[626px]" fill="none">
      <g stroke="#c4c4c4" shapeRendering="crispEdges">
        {GRID_X.map((x) => (
          <path key={x} d={`M${x} 265V605`} />
        ))}
        {GRID_Y.map((y) => (
          <path key={y} d={`M603 ${y}H943`} />
        ))}
      </g>
      <g stroke="#12701a">
        <path d="M559.5 265V605" />
        {GRID_Y.map((y) => (
          <path key={y} d={`M553 ${y}H603M556 ${y + 3}l6-6`} />
        ))}
        {GRID_X.map((x) => (
          <path key={x} d={`M${x} 605V644`} />
        ))}
      </g>
      <g fill="#c8c8c8" fontFamily="'Liberation Sans', sans-serif" fontSize="12">
        {GRID_Y.slice(1).map((y) => (
          <text key={y} x="559" y={y - 13}>
            100
          </text>
        ))}
        {GRID_X.slice(1).map((x) => (
          <text key={x} x={x - 17} y="639" textAnchor="middle">
            100
          </text>
        ))}
      </g>
      <g stroke="#fff">
        {[387.5, 550.5, 577.5].map((y) => (
          <path key={y} d={`M671 ${y}H875M671.5 ${y - 5}v11M874.5 ${y - 5}v11M667 ${y + 5}l10-10M870 ${y + 5}l10-10`} />
        ))}
        {[589.5, 956.5, 983.5].map((x) => (
          <path key={x} d={`M${x} 401V537M${x - 6} 401.5h12M${x - 6} 536.5h12M${x - 5} 397l9 9M${x - 5} 532l9 9`} />
        ))}
      </g>
      <path
        d="M671 401.500H875A67.500 67.500 0 0 1 875 536.500H671A67.500 67.500 0 0 1 671 401.500Z"
        stroke="#ee0b0b"
        strokeWidth="3"
      />
      <path d="M764 460l16 16M780 460l-16 16" stroke="#ee0b0b" strokeWidth="2.500" />
      <g fill="#16ef16" fontFamily="'DejaVu Serif', serif" fontSize="16" fontWeight="bold" textAnchor="middle">
        <text x="773" y="383">600</text>
        <text x="773" y="566">600</text>
        <text x="773" y="593">600</text>
        <text x="580" y="474">400</text>
        <text x="967" y="474">400</text>
        <text x="994" y="474">400</text>
      </g>
    </svg>
  );
}

function PolygonEditor() {
  const [offsetMode, setOffsetMode] = useState('不偏移');

  return (
    <section
      role="dialog"
      aria-label="多边形编辑器"
      className="absolute bottom-0 left-[394px] right-0 top-[142px] flex flex-col overflow-hidden rounded-tl-lg border-l-[3px] border-[#0842c8] bg-[#ece9d8]"
    >
      <header className="flex h-[29px] shrink-0 items-center bg-gradient-to-b from-[#0a6cf5] via-[#0050dd] to-[#0560f5] pl-[2px] text-white">
        <Icon>
          <path d="M0 0h16v16H0z" fill="#35b567" />
          <path d="M4.500 3v10M4.500 8h6M10 6.500h3v3h-3z" stroke="#e5fff0" />
        </Icon>
        <h1 className="ml-1 text-sm font-bold">多边形编辑器</h1>
      </header>
      <div className="flex h-[26px] shrink-0 items-center border-b border-[#d0cdbd] bg-gradient-to-b from-[#f5f4ec] to-[#e6e2d0]">
        <Grip className="ml-[2px]" />
        <ToolButton icon={<GridIcon />} label="定义网格" className="ml-[7px]" />
        <Divider className="ml-[6px]" />
        <ToolButton icon={<LineIcon />} label="画直线" disabled className="ml-[6px]" />
        <ToolButton icon={<ArcIcon />} label="画弧" disabled className="ml-[7px]" />
        <ToolButton icon={<CircleIcon />} label="画圆" disabled className="ml-[7px]" />
        <Divider className="ml-[6px]" />
        <ToolButton icon={<CrossIcon className="text-[#44475a]" />} label="清除多边形" className="ml-[5px]" />
        <Divider className="ml-[7px]" />
        <ToolButton icon={<UndoIcon className="text-[#6f93dc]" />} label="回退" className="ml-[6px]" />
        <Divider className="ml-[6px]" />
        <ToolButton icon={<InsertPointIcon />} label="设置插入点" className="ml-[6px]" />
        <Divider className="ml-[6px]" />
        <ToolButton icon={<TransferIcon />} label="导入" className="ml-[6px]" />
        <ToolButton icon={<TransferIcon out />} label="导出" className="ml-[7px]" />
        <Divider className="ml-[6px]" />
        <ToolButton icon={<SearchIcon />} className="ml-[6px]" />
      </div>
      <div className="flex h-[26px] shrink-0 items-center border-b border-[#b9b6a6]">
        <Grip className="ml-[2px]" />
        <fieldset className="ml-1 flex w-[187px] items-center">
          {['不偏移', '正交', '极坐标'].map((mode) => (
            <label key={mode} className="mr-2 flex shrink-0 items-center">
              <input
                type="radio"
                name="offset-mode"
                value={mode}
                checked={offsetMode === mode}
                onChange={() => setOffsetMode(mode)}
                className="mr-2 h-[13px] w-[13px] appearance-none rounded-full border border-[#1c5180] bg-white bg-radial from-white from-0% to-white checked:from-[#21a121] checked:from-30% checked:to-40%"
              />
              {mode}
            </label>
          ))}
        </fieldset>
        <Divider />
        <CoordinateField axis="X" className="ml-[5px]" />
        <CoordinateField axis="Y" className="ml-[14px]" />
      </div>
      <div className="mt-[2px] h-[419px] shrink-0 overflow-hidden bg-black">
        <PolygonDrawing />
      </div>
      <footer className="flex flex-1 justify-end overflow-hidden border-t border-white pt-[9px]">
        <button
          type="button"
          className="-mr-[25px] h-[23px] w-[71px] shrink-0 rounded-[3px] border border-[#003c74] bg-gradient-to-b from-white to-[#ecebe5] shadow-[inset_0_0_0_2px_#a9c4f0]"
        >
          确定
        </button>
      </footer>
    </section>
  );
}

function BrowserBackdrop() {
  return (
    <aside className="flex w-[134px] shrink-0 flex-col bg-white">
      <div className="h-[6px] border-b border-[#a8a8a8] bg-[#f0f0f0]" />
      <div className="h-[26px] border-b border-[#b4b4b4]" />
      <div className="h-[65px] border-b border-[#b4b4b4] bg-[#f0f0f0]" />
      <div className="w-[68px] whitespace-nowrap text-[6px] leading-3 text-gray-600">
        <p>
          <span className="text-gray-300">www.</span>
          <span className="text-[7px] text-black">fwxgx.com</span>
          <span className="text-gray-300">/questio</span>
        </p>
        <p className="flex items-center gap-[2px] bg-gray-100 pl-[5px]">
          <span className="h-[5px] w-[5px] shrink-0 border border-green-600" />
          软件-234
          <span className="h-[5px] w-[5px] shrink-0 rounded-full bg-amber-400" />
          佛山天气
        </p>
        <p className="flex items-center gap-[2px] bg-gray-200">
          一代安全..×
          <span className="h-[6px] w-[6px] shrink-0 bg-teal-600" />
          专业造价
        </p>
      </div>
    </aside>
  );
}

function AnnotationArrows() {
  return (
    <svg className="pointer-events-none absolute left-0 top-0 h-[676px] w-[1022px]" viewBox="0 0 1022 676" fill="none">
      <g stroke="#f81010" strokeWidth="3">
        <path d="M457 175L327 407" />
        <path d="M293 419L112 497" />
        <path d="M664 485L475 170" />
      </g>
      <g fill="#f81010">
        <path d="M320 420L321 401L334 408Z" />
        <path d="M98 503L112 490L117 502Z" />
        <path d="M468 157L482 168L470 175Z" />
      </g>
    </svg>
  );
}

export default function App() {
  return (
    <div className="relative flex h-screen overflow-hidden bg-white font-['Liberation_Sans','Noto_Sans_CJK_SC',sans-serif] text-xs leading-4 text-black">
      <main className="flex min-w-0 flex-1 flex-col overflow-hidden border-r-4 border-[#6f7fdc] bg-[#ece9d8]">
        <div className="flex h-[6px] shrink-0 justify-end gap-1 bg-gradient-to-b from-[#7ba5ef] to-[#7786e0] pr-[2px]">
          <span className="h-[3px] w-5 rounded-b border border-t-0 border-white bg-[#4a70d8]" />
          <span className="h-[3px] w-5 rounded-b border border-t-0 border-white bg-[#4a70d8]" />
          <span className="h-[3px] w-5 rounded-b border border-t-0 border-white bg-[#c05a5a]" />
        </div>
        <MenuBar />
        <AccountBar />
        <MainToolbar />
        <div className="flex min-h-0 flex-1">
          <NavigationPanel />
          <section className="ml-1 flex w-[245px] shrink-0 flex-col">
            <ComponentList />
            <PropertyEditor />
          </section>
          <QuantityPanel />
        </div>
      </main>
      <BrowserBackdrop />
      <PolygonEditor />
      <AnnotationArrows />
    </div>
  );
}
